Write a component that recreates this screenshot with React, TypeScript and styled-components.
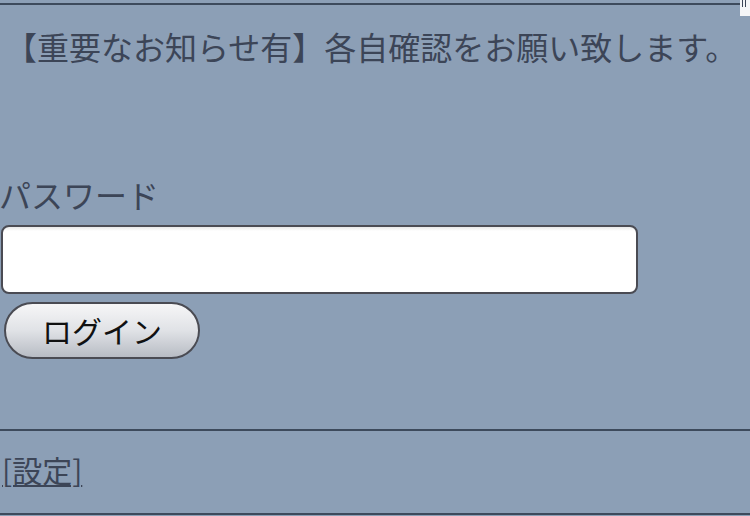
import React from "react";
import styled, { createGlobalStyle } from "styled-components";

const GlobalStyle = createGlobalStyle`
  html, body {
    margin: 0;
    padding: 0;
    background: #8c9fb6;
  }
  body {
    font-family: "Noto Sans CJK JP", "Noto Sans", sans-serif;
    color: #3c4557;
  }
`;

const Page = styled.div`
  position: relative;
  width: 750px;
  height: 516px;
  overflow: hidden;
  padding-top: 3px;
  box-sizing: border-box;
`;

const Corner = styled.div`
  position: absolute;
  top: 0;
  right: 0;
  width: 10px;
  height: 16px;
  background: #f4f5f7;
  &::before {
    content: "";
    position: absolute;
    left: 2px;
    top: 0;
    width: 1px;
    height: 7px;
    background: #3c4557;
    box-shadow: 3px 0 0 #3c4557;
  }
`;

const Header = styled.div`
  border-top: 2px solid #3d4a5c;
  margin-right: 10px;
`;

const Notice = styled.p`
  margin: 0;
  padding: 19px 7px 0 5px;
  font-size: 32px;
  line-height: 44px;
  white-space: nowrap;
`;

const LoginForm = styled.form`
  display: flex;
  flex-direction: column;
  align-items: flex-start;
  margin-top: 107px;
  height: 254px;
`;

const Label = styled.label`
  font-size: 32px;
  line-height: 38px;
  margin-left: -1px;
`;

const PasswordInput = styled.input`
  box-sizing: border-box;
  width: 637px;
  height: 69px;
  margin: 12px 0 0 1px;
  border: 2px solid #4a4b53;
  border-radius: 8px;
  background: linear-gradient(#e8e8e8 0, #ffffff 4px);
  outline: none;
`;

const LoginButton = styled.button`
  box-sizing: border-box;
  width: 196px;
  height: 57px;
  margin: 8px 0 0 4px;
  border: 2px solid #4a4b53;
  border-radius: 29px;
  background: linear-gradient(#f6f6f7, #e0e2e6 50%, #b8bcc4);
  font-family: "Noto Sans CJK JP", sans-serif;
  font-size: 30px;
  color: #111;
  padding: 0 0 2px;
`;

const Footer = styled.div`
  border-top: 2px solid #3d4a5c;
  border-bottom: 2px solid #3d4a5c;
  height: 82px;
  box-sizing: content-box;
  display: flex;
  align-items: center;
  padding-bottom: 0;
`;

const SettingsLink = styled.a`
  font-size: 30px;
  line-height: 40px;
  color: #3c4557;
  text-decoration: underline;
  text-underline-offset: 3px;
  text-decoration-thickness: 2px;
  margin: 0 0 6px 2px;
`;

export default function App() {
  return (
    <>
      <GlobalStyle />
      <Page>
        <Corner />
        <Header>
          <Notice>【重要なお知らせ有】各自確認をお願い致します。</Notice>
        </Header>
        <LoginForm onSubmit={(e) => e.preventDefault()}>
          <Label htmlFor="pw">パスワード</Label>
          <PasswordInput id="pw" type="password" />
          <LoginButton type="submit">ログイン</LoginButton>
        </LoginForm>
        <Footer>
          <SettingsLink href="#">[設定]</SettingsLink>
        </Footer>
      </Page>
    </>
  );
}
